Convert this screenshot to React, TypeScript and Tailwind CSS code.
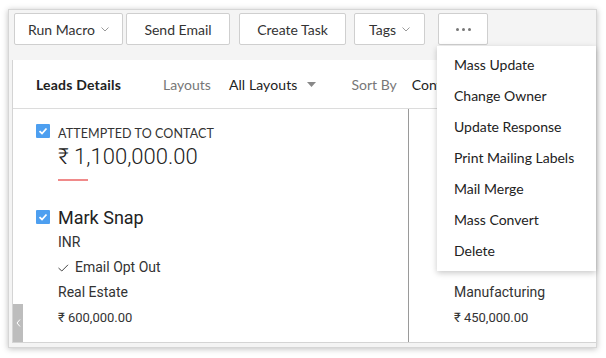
import React from 'react';

const ui = { fontFamily: '"Lato", "Open Sans", sans-serif' };
const rb = { fontFamily: 'Roboto, "Liberation Sans", sans-serif' };

function Caret() {
  return (
    <svg width="8" height="5" viewBox="0 0 8 5" className="ml-[6px]">
      <path d="M0.5 0.5 L4 4 L7.5 0.5" fill="none" stroke="#9a9a9a" strokeWidth="1" />
    </svg>
  );
}

function Check() {
  return (
    <div className="w-[14px] h-[14px] bg-[#4d9ff0] rounded-[1px] flex items-center justify-center shrink-0">
      <svg width="10" height="8" viewBox="0 0 10 8">
        <path d="M1.5 4.2 L4 6.5 L8.5 1.5" fill="none" stroke="#fff" strokeWidth="1.8" />
      </svg>
    </div>
  );
}

const menuItems = ['Mass Update', 'Change Owner', 'Update Response', 'Print Mailing Labels', 'Mail Merge', 'Mass Convert', 'Delete'];

export default function App() {
  return (
    <div className="w-[606px] h-[358px] bg-white relative overflow-hidden" style={ui}>
      {/* window frame */}
      <div className="absolute left-[8px] top-[9px] w-[589px] h-[339px] bg-[#f4f4f4] border border-[#d6d6d6] shadow-[0_1px_6px_rgba(0,0,0,0.25)] flex flex-col">
        {/* toolbar */}
        <div className="h-[50px] shrink-0 flex items-start pt-[3px] pl-[5px] text-[14px] text-[#333]">
          <div className="h-[32px] w-[109px] bg-white border border-[#cfcfcf] rounded-[2px] flex items-center justify-center">
            Run Macro<Caret />
          </div>
          <div className="h-[32px] w-[104px] ml-[3px] bg-white border border-[#cfcfcf] rounded-[2px] flex items-center justify-center">
            Send Email
          </div>
          <div className="h-[32px] w-[107px] ml-[9px] bg-white border border-[#cfcfcf] rounded-[2px] flex items-center justify-center">
            Create Task
          </div>
          <div className="h-[32px] w-[71px] ml-[8px] bg-white border border-[#cfcfcf] rounded-[2px] flex items-center justify-center">
            Tags<Caret />
          </div>
          <div className="h-[32px] w-[50px] ml-[13px] bg-white border border-[#cfcfcf] rounded-[2px] flex items-center justify-center gap-[3px]">
            <span className="w-[3px] h-[3px] rounded-full bg-[#777]" />
            <span className="w-[3px] h-[3px] rounded-full bg-[#777]" />
            <span className="w-[3px] h-[3px] rounded-full bg-[#777]" />
          </div>
        </div>

        {/* content panel */}
        <div className="ml-[3px] mb-[4px] flex-1 bg-white border-l border-b border-[#d4d4d4] flex flex-col relative">
          <div className="h-[49px] shrink-0 border-b border-[#dcdcdc] flex items-center">
            <div className="w-[424px] flex items-center text-[14px] whitespace-nowrap overflow-hidden">
              <span className="ml-[23px] font-bold text-[#222] tracking-[0.2px]">Leads Details</span>
              <span className="ml-[42px] text-[#777]">Layouts</span>
              <span className="ml-[18px] text-[#222] tracking-[0.1px]">All Layouts</span>
              <svg width="9" height="5" viewBox="0 0 9 5" className="ml-[10px] shrink-0">
                <path d="M0 0 L9 0 L4.5 5 Z" fill="#888" />
              </svg>
              <span className="ml-[35px] text-[#777]">Sort By</span>
              <span className="ml-[15px] text-[#222]">Conversion</span>
            </div>
          </div>

          <div className="flex-1 flex">
            <div className="w-[396px] border-r border-[#9a9a9a] pl-[23px] pt-[15px] relative">
              <div className="flex items-start">
                <Check />
                <div className="ml-[8px]">
                  <div className="text-[12.5px] leading-[15px] mt-[2px] text-[#333] tracking-[0.1px]">ATTEMPTED TO CONTACT</div>
                  <div className="text-[22px] leading-[26px] mt-[3px] text-[#222] font-light" style={rb}>₹ 1,100,000.00</div>
                  <div className="w-[30px] h-[2px] bg-[#f08a8a] mt-[9px]" />
                </div>
              </div>
              <div className="flex items-start mt-[28px]">
                <div className="mt-[1px]"><Check /></div>
                <div className="ml-[8px] text-[#333]" style={rb}>
                  <div className="text-[18px] leading-[18px] text-[#222]">Mark Snap</div>
                  <div className="text-[14px] leading-[25px] mt-[3px]">INR</div>
                  <div className="text-[14px] leading-[25px] flex items-center">
                    <svg width="11" height="8" viewBox="0 0 11 8" className="mr-[6px]">
                      <path d="M0.5 4 L3.8 7 L10 0.8" fill="none" stroke="#444" strokeWidth="1" />
                    </svg>
                    Email Opt Out
                  </div>
                  <div className="text-[14px] leading-[25px]">Real Estate</div>
                  <div className="text-[13px] leading-[25px]">₹ 600,000.00</div>
                </div>
              </div>
              <div className="absolute left-0 bottom-0 w-[10px] h-[38px] bg-[#bdbdbd] flex items-center justify-center">
                <svg width="5" height="8" viewBox="0 0 5 8">
                  <path d="M4 0.5 L1 4 L4 7.5" fill="none" stroke="#fff" strokeWidth="1" />
                </svg>
              </div>
            </div>
            <div className="flex-1 pl-[45px] pt-[171px] text-[#333]" style={rb}>
              <div className="text-[14px] leading-[25px]">Manufacturing</div>
              <div className="text-[13px] leading-[25px]">₹ 450,000.00</div>
            </div>
          </div>
        </div>

        {/* dropdown menu */}
        <div className="absolute left-[428px] top-[36px] w-[159px] h-[225px] bg-white shadow-[0_2px_6px_rgba(0,0,0,0.22)] pt-[3px]">
          {menuItems.map(m => (
            <div key={m} className="h-[31px] flex items-center pl-[17px] text-[14px] text-[#222]">{m}</div>
          ))}
        </div>
      </div>
    </div>
  );
}
